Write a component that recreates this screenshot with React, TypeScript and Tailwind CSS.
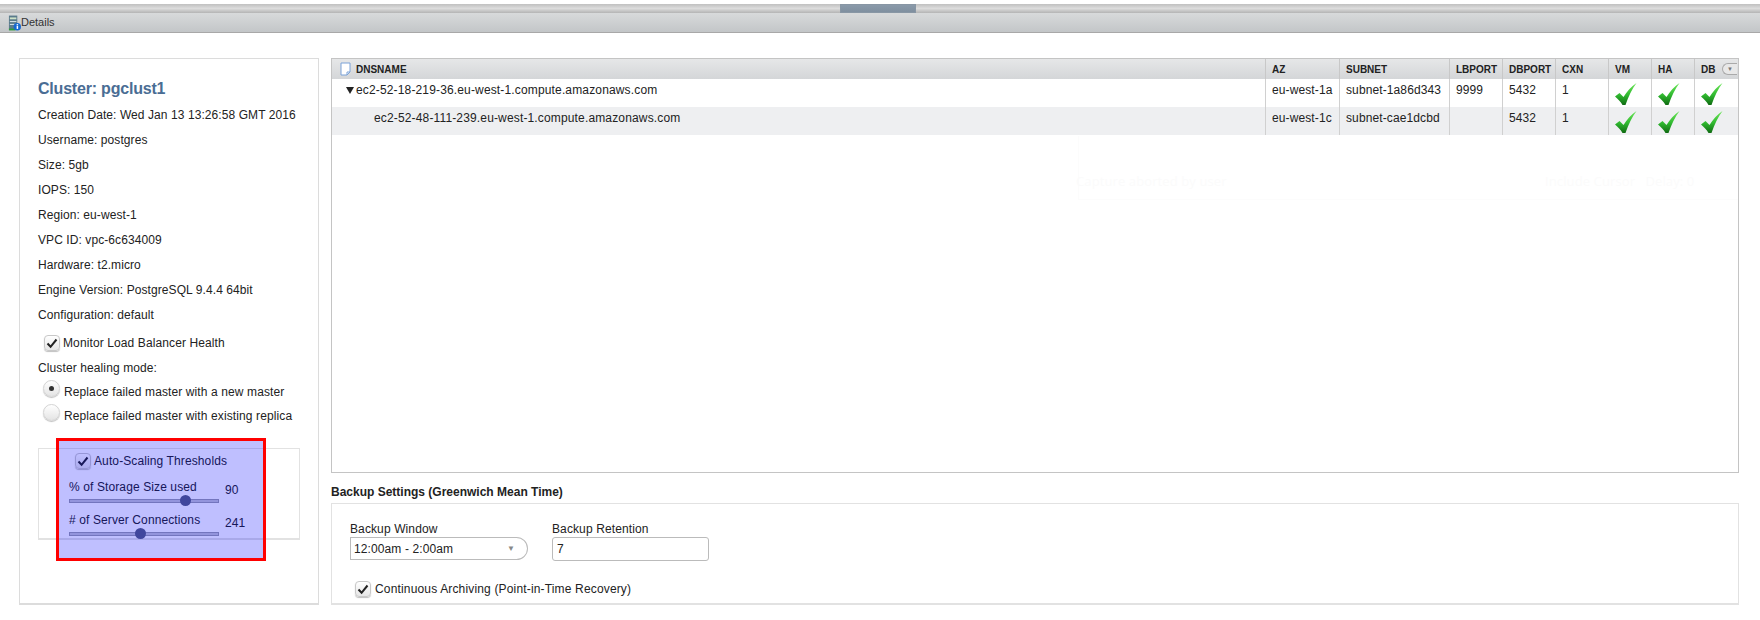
const infoLines = [
  "Creation Date: Wed Jan 13 13:26:58 GMT 2016",
  "Username: postgres",
  "Size: 5gb",
  "IOPS: 150",
  "Region: eu-west-1",
  "VPC ID: vpc-6c634009",
  "Hardware: t2.micro",
  "Engine Version: PostgreSQL 9.4.4 64bit",
  "Configuration: default",
];

const headers = ["AZ", "SUBNET", "LBPORT", "DBPORT", "CXN", "VM", "HA", "DB"];

const rows = [
  {
    name: "ec2-52-18-219-36.eu-west-1.compute.amazonaws.com",
    master: true,
    az: "eu-west-1a",
    subnet: "subnet-1a86d343",
    lb: "9999",
    db: "5432",
    cxn: "1",
  },
  {
    name: "ec2-52-48-111-239.eu-west-1.compute.amazonaws.com",
    master: false,
    az: "eu-west-1c",
    subnet: "subnet-cae1dcbd",
    lb: "",
    db: "5432",
    cxn: "1",
  },
];

const gridCols = "grid-cols-[933px_74px_110px_53px_53px_53px_43px_43px_43px]";

function Checkbox() {
  return (
    <span className="w-[16px] h-[16px] shrink-0 flex items-center justify-center rounded-[4px] border border-[#c8c8c8] bg-gradient-to-b from-white to-[#e6e6e6] shadow-[0_1px_1px_rgba(0,0,0,0.25)]">
      <svg width="12" height="12" viewBox="0 0 12 12" fill="none">
        <path d="M1.5 6.5 L4.6 9.8 L10.5 2.5" stroke="#222" strokeWidth="2" />
      </svg>
    </span>
  );
}

function Radio({ on }: { on?: boolean }) {
  return (
    <span className="w-[17px] h-[17px] shrink-0 mt-[-6px] flex items-center justify-center rounded-full border border-[#d4d4d4] bg-gradient-to-b from-white to-[#e4e4e4] shadow-[0_1px_1px_rgba(0,0,0,0.25)]">
      {on && <span className="w-[5px] h-[5px] rounded-full bg-[#333]" />}
    </span>
  );
}

function GreenCheck({ id }: { id: string }) {
  return (
    <svg width="22" height="22" viewBox="0 0 22 22">
      <defs>
        <linearGradient id={id} x1="0" y1="0" x2="0" y2="1">
          <stop offset="0" stopColor="#6ee85a" />
          <stop offset="0.55" stopColor="#2fb82f" />
          <stop offset="1" stopColor="#0f6a12" />
        </linearGradient>
      </defs>
      <path
        d="M0 13.5 L4.5 10 L8.5 14 C12 8.5 16 3.5 21.5 0 C17 6 13.5 13.5 10.5 22 L7.5 22 C5.5 18.5 3 16 0 13.5 Z"
        fill={`url(#${id})`}
      />
    </svg>
  );
}

function Slider({ label, value, pos }: { label: string; value: string; pos: string }) {
  return (
    <div className="flex h-[33px]">
      <div className="w-[150px]">
        <div className="h-[20px] leading-[19px]">{label}</div>
        <div className="relative h-[4px] mt-[1px] bg-[#c4c6d0] border border-[#9a9da8]">
          <span className={`absolute top-[-5px] w-[11px] h-[11px] rounded-full bg-[#565e7c] ${pos}`} />
        </div>
      </div>
      <div className="ml-[6px] pt-[2px] leading-[20px]">{value}</div>
    </div>
  );
}

export default function App() {
  return (
    <div className="relative w-[1760px] h-[620px] overflow-hidden bg-white text-[12px] tracking-[0.11px] text-[#222] font-['Liberation_Sans',Arial,sans-serif]">
      {/* splitter */}
      <div className="h-[4px] bg-white" />
      <div className="h-[9px] flex justify-center bg-gradient-to-b from-[#c0c0c0] via-[#dcdcdc] to-[#b4b4b4]">
        <div className="w-[76px] ml-[-4px] bg-gradient-to-b from-[#8a9aaa] to-[#7f8f9f] border border-[#8896a4]" />
      </div>
      {/* toolbar */}
      <div className="h-[20px] flex items-center pl-[8px] bg-gradient-to-b from-[#d8dadb] to-[#c3c6c8] border-b border-[#a8a8a8]">
        <svg width="13" height="18" viewBox="0 0 14 18">
          <rect x="1" y="1" width="9" height="15" fill="#5b7b8c" />
          <rect x="2" y="3" width="7" height="2" fill="#cfe3c8" />
          <rect x="2" y="7" width="7" height="1" fill="#e4eef0" />
          <rect x="2" y="10" width="7" height="1" fill="#e4eef0" />
          <rect x="1" y="15" width="7" height="2" fill="#2e9a3e" />
          <circle cx="10" cy="13" r="4" fill="#1668d0" />
          <rect x="9.3" y="12" width="1.6" height="3.4" fill="#fff" />
          <rect x="9.3" y="10.2" width="1.6" height="1.2" fill="#fff" />
        </svg>
        <span className="text-[11px] tracking-normal text-[#333]">Details</span>
      </div>

      <div className="flex items-start pl-[19px] pt-[25px] gap-[12px]">
        {/* cluster panel */}
        <div className="relative w-[300px] h-[547px] shrink-0 border border-[#dcdcdc] border-b-2 pl-[18px] pt-[14px]">
          <div className="h-[30px] leading-[31px] text-[16px] tracking-[-0.2px] font-bold text-[#4a6d94]">Cluster: pgclust1</div>
          {infoLines.map((line) => (
            <div key={line} className="h-[25px] leading-[25px] tracking-[0.08px]">
              {line}
            </div>
          ))}
          <div className="flex items-center gap-[3px] h-[20px] mt-[5px] ml-[6px]">
            <Checkbox />
            <span>Monitor Load Balancer Health</span>
          </div>
          <div className="h-[20px] leading-[20px] mt-[5px]">Cluster healing mode:</div>
          <div className="flex items-center gap-[4px] h-[24px] mt-[1px] ml-[5px]">
            <Radio on />
            <span className="mt-[1px]">Replace failed master with a new master</span>
          </div>
          <div className="flex items-center gap-[4px] h-[24px] ml-[5px]">
            <Radio />
            <span className="mt-[1px]">Replace failed master with existing replica</span>
          </div>

          {/* thresholds */}
          <div className="w-[262px] h-[92px] mt-[21px] border border-[#e2e2e2] border-b-2 pl-[30px]">
            <div className="flex items-center gap-[3px] h-[24px] mb-[5px] ml-[6px]">
              <Checkbox />
              <span>Auto-Scaling Thresholds</span>
            </div>
            <Slider label="% of Storage Size used" value="90" pos="left-[110px]" />
            <Slider label="# of Server Connections" value="241" pos="left-[65px]" />
          </div>
        </div>

        {/* right column */}
        <div className="w-[1408px] shrink-0">
          <div className="h-[415px] border border-[#c4c4c4]">
            <div className={`grid ${gridCols} h-[20px] bg-gradient-to-b from-[#e6e7e8] to-[#d4d6d8] text-[10px] tracking-normal font-bold text-[#222]`}>
              <div className="flex items-center pl-[8px] gap-[5px]">
                <svg width="11" height="14" viewBox="0 0 11 14" fill="none">
                  <path d="M1 1 H10 V10 L7 13 H1 Z" fill="#fff" stroke="#7aa2d8" />
                  <path d="M7 13 V10 H10" stroke="#7aa2d8" />
                </svg>
                DNSNAME
              </div>
              {headers.map((h) => (
                <div key={h} className="relative flex items-center pl-[6px] border-l border-[#c8c8c8]">
                  {h}
                  {h === "DB" && (
                    <span className="absolute right-0 top-[4px] w-[15px] h-[12px] flex items-center justify-center rounded-l-full border border-r-0 border-[#aaa] bg-[#e8e8e8] text-[6px] text-[#777]">
                      ▼
                    </span>
                  )}
                </div>
              ))}
            </div>
            {rows.map((r, i) => (
              <div key={r.name} className={`grid ${gridCols} h-[28px] leading-[22px] ${i % 2 ? "bg-[#eeeff1]" : "bg-white"}`}>
                <div className={`tracking-[0.15px] ${r.master ? "pl-[14px] flex items-start" : "pl-[42px]"}`}>
                  {r.master && <span className="mt-[8px] mr-[2px] w-0 h-0 border-x-[4px] border-x-transparent border-t-[7px] border-t-[#222]" />}
                  <span>{r.name}</span>
                </div>
                {[r.az, r.subnet, r.lb, r.db, r.cxn].map((v, j) => (
                  <div key={j} className="pl-[6px] border-l border-[#d0d0d0]">
                    {v}
                  </div>
                ))}
                {["vm", "ha", "db"].map((c) => (
                  <div key={c} className="pl-[6px] pt-[4px] border-l border-[#d0d0d0]">
                    <GreenCheck id={`${c}-${i}`} />
                  </div>
                ))}
              </div>
            ))}
          </div>

          <div className="h-[30px] leading-[39px] tracking-normal font-bold">Backup Settings (Greenwich Mean Time)</div>
          <div className="h-[102px] border border-[#e2e2e2] border-b-2 pl-[18px] pt-[18px]">
            <div className="flex gap-[24px]">
              <div className="w-[178px]">
                <div className="h-[15px] leading-[15px]">Backup Window</div>
                <div className="flex items-center justify-between h-[23px] pl-[3px] pr-[12px] rounded-l-[3px] rounded-r-full border border-[#bbb]">
                  <span>12:00am - 2:00am</span>
                  <span className="text-[8px] text-[#888]">▼</span>
                </div>
              </div>
              <div className="w-[157px]">
                <div className="h-[15px] leading-[15px]">Backup Retention</div>
                <div className="flex items-center h-[24px] pl-[4px] rounded-[3px] border border-[#bbb]">7</div>
              </div>
            </div>
            <div className="flex items-center gap-[4px] h-[20px] mt-[18px] ml-[5px] tracking-[0.16px]">
              <Checkbox />
              <span>Continuous Archiving (Point-in-Time Recovery)</span>
            </div>
          </div>
        </div>
      </div>

      {/* highlight over the thresholds */}
      <div className="absolute left-[56px] top-[438px] w-[210px] h-[123px] border-[3px] border-[#ff0000] bg-[#0000ff]/25" />

      {/* faint capture window showing through */}
      <div className="absolute left-[1078px] top-[136px] w-[660px] h-[64px] border-l border-b border-[#fcfcfc]" />
      <div className="absolute left-[1076px] top-[172px] text-[13px] text-[#fbfbfb] font-['Open_Sans',sans-serif]">
        Capture aborted by user
      </div>
      <div className="absolute left-[1545px] top-[172px] text-[13px] text-[#fbfbfb] font-['Open_Sans',sans-serif]">
        Include Cursor &nbsp; Delay: 0
      </div>
    </div>
  );
}
